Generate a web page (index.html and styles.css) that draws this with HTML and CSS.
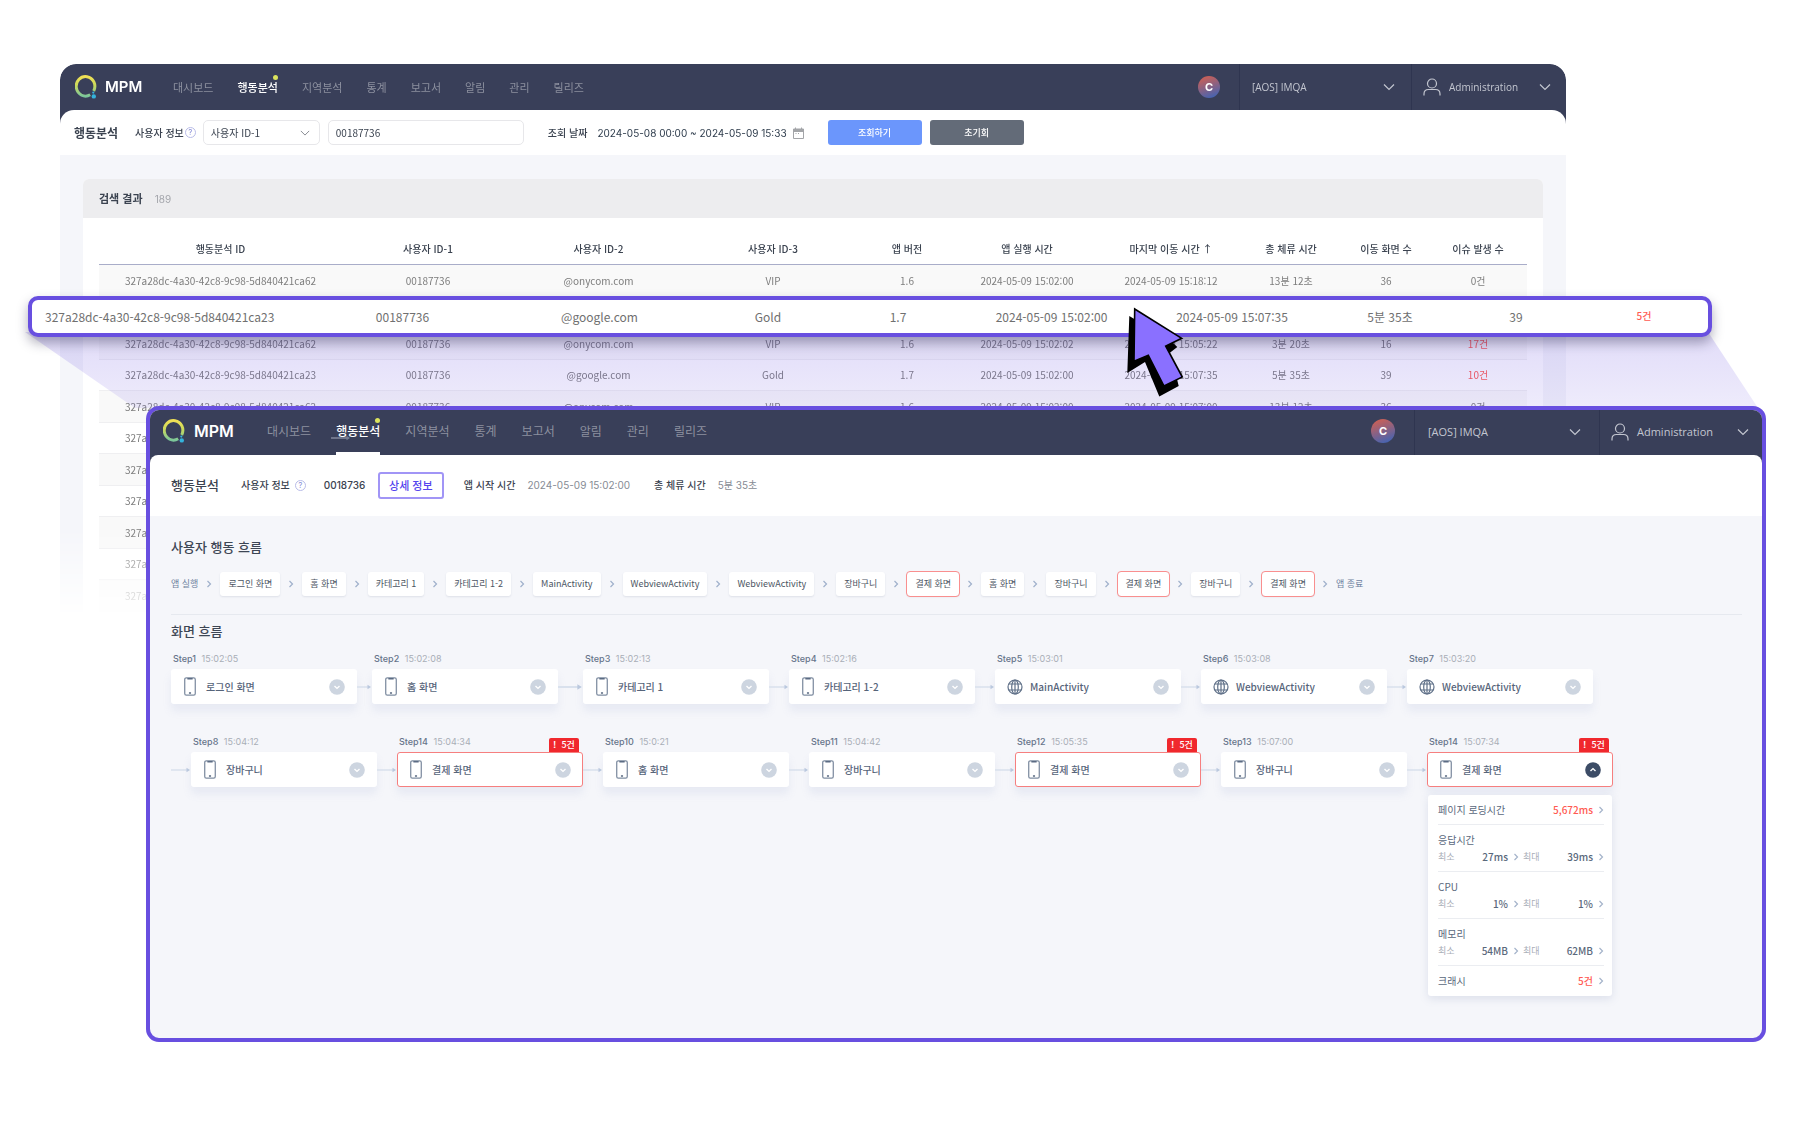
FILE: index.html
```html
<!DOCTYPE html>
<html lang="ko">
<head>
<meta charset="utf-8">
<meta name="viewport" content="width=device-width, initial-scale=1">
<title>IMQA MPM 행동분석</title>
<link rel="stylesheet" href="styles.css">
</head>
<body>
<svg class="sprite" aria-hidden="true">
  <defs>
    <linearGradient id="ring" x1="0" y1="0" x2="0" y2="1"><stop offset="0" stop-color="#f0e055"/><stop offset=".45" stop-color="#c9d95c"/><stop offset="1" stop-color="#7cc79a"/></linearGradient>
    <linearGradient id="beam" x1="0" y1="0" x2="0" y2="1"><stop offset="0" stop-color="#684fe0" stop-opacity=".2"/><stop offset="1" stop-color="#684fe0" stop-opacity=".11"/></linearGradient>
  </defs>
  <symbol id="logo" viewBox="0 0 22 24"><path d="M15.200 19.800A9.300 9.800 0 1 1 18.700 16" fill="none" stroke="url(#ring)" stroke-width="3"/><circle cx="18.800" cy="21.400" r="2.200" fill="#35b3dc"/><circle cx="18.300" cy="17.600" r="1.100" fill="#35b3dc"/></symbol>
  <symbol id="down" viewBox="0 0 12 8"><path d="M1 1.500l5 5 5-5" fill="none" stroke="currentColor" stroke-width="1.200"/></symbol>
  <symbol id="next" viewBox="0 0 6 8"><path d="M1.500 1l3 3-3 3" fill="none" stroke="currentColor" stroke-width="1.200"/></symbol>
  <symbol id="user" viewBox="0 0 18 18"><circle cx="9" cy="5.500" r="4.500" fill="none" stroke="currentColor" stroke-width="1.200"/><path d="M1 17.500V16Q1 11.500 5.500 11.500H12.500Q17 11.500 17 16V17.500" fill="none" stroke="currentColor" stroke-width="1.200"/></symbol>
  <symbol id="cal" viewBox="0 0 11 12"><path d="M.5 2.500h10v9H.5z" fill="none" stroke="#a3a5a8"/><path d="M.5 2h10v2.500H.5zM2.500.5v2M8.500.5v2" fill="#a3a5a8" stroke="#a3a5a8"/><path d="M2.500 6.500h1M5 6.500h1" stroke="#a3a5a8"/></symbol>
  <symbol id="phone" viewBox="0 0 12 18"><rect x="1" y=".8" width="10" height="16.400" rx="1.500" fill="none" stroke="#7f8da1" stroke-width="1.200"/><path d="M3.500 1.600h5M5 15.200h2" stroke="#5b6b83" stroke-width="1.400"/></symbol>
  <symbol id="globe" viewBox="0 0 16 16"><g fill="none" stroke="#5f7088" stroke-width="1.200"><circle cx="8" cy="8" r="7"/><ellipse cx="8" cy="8" rx="3.300" ry="7"/><path d="M8 1v14M1.800 5h12.400M1.800 11h12.400"/></g></symbol>
  <symbol id="toggle" viewBox="0 0 16 16"><circle cx="8" cy="8" r="7.800" fill="#cdd5e0"/><path d="M5.500 7L8 9.400 10.500 7" fill="none" stroke="#fff" stroke-width="1.400"/></symbol>
  <symbol id="toggle-open" viewBox="0 0 16 16"><circle cx="8" cy="8" r="7.800" fill="#3c4c66"/><path d="M5.500 9L8 6.600 10.500 9" fill="none" stroke="#fff" stroke-width="1.400"/></symbol>
  <symbol id="arrow" viewBox="0 0 20 6" preserveAspectRatio="xMaxYMid slice"><path d="M-10 3h26" stroke="#d9e1ed" stroke-width="1.500"/><path d="M15.500.8l3.500 2.200-3.500 2.200z" fill="#bccadf"/></symbol>
</svg>

<main class="stage">
  <section class="window" aria-label="행동분석 검색">
    <div class="window-top">
      <header class="topbar">
        <a class="brand" href="#"><svg class="brand-mark"><use href="#logo"/></svg>MPM</a>
        <nav class="menu">
          <a href="#">대시보드</a><a class="active" href="#">행동분석</a><a href="#">지역분석</a><a href="#">통계</a><a href="#">보고서</a><a href="#">알림</a><a href="#">관리</a><a href="#">릴리즈</a>
        </nav>
        <span class="company">C</span>
        <label class="project"><select aria-label="프로젝트"><option>[AOS] IMQA</option></select><svg class="chev"><use href="#down"/></svg></label>
        <button class="account" type="button"><svg class="user"><use href="#user"/></svg>Administration<svg class="chev"><use href="#down"/></svg></button>
      </header>
      <form class="filters">
        <h1 class="filters-title">행동분석</h1>
        <label class="filters-label" for="id-kind">사용자 정보</label>
        <span class="help">?</span>
        <span class="pick"><select id="id-kind"><option>사용자 ID-1</option></select><svg class="chev"><use href="#down"/></svg></span>
        <input class="id-input" type="text" value="00187736" aria-label="사용자 ID">
        <span class="filters-label">조회 날짜</span>
        <span class="range">2024-05-08 00:00 ~ 2024-05-09 15:33</span>
        <svg class="cal"><use href="#cal"/></svg>
        <button class="btn btn-primary" type="button">조회하기</button>
        <button class="btn" type="button">초기회</button>
      </form>
    </div>
    <div class="results">
      <h2 class="results-head">검색 결과 <span>189</span></h2>
      <div class="results-body">
        <table class="sessions">
          <colgroup><col class="c-id"><col class="c-u1"><col class="c-u2"><col class="c-u3"><col class="c-ver"><col class="c-start"><col class="c-last"><col class="c-stay"><col class="c-moves"><col class="c-issues"></colgroup>
          <thead><tr><th>행동분석 ID</th><th>사용자 ID-1</th><th>사용자 ID-2</th><th>사용자 ID-3</th><th>앱 버전</th><th>앱 실행 시간</th><th>마지막 이동 시간 ↑</th><th>총 체류 시간</th><th>이동 화면 수</th><th>이슈 발생 수</th></tr></thead>
          <tbody>
            <tr><td>327a28dc-4a30-42c8-9c98-5d840421ca62</td><td>00187736</td><td>@onycom.com</td><td>VIP</td><td>1.6</td><td>2024-05-09 15:02:00</td><td>2024-05-09 15:18:12</td><td>13분 12초</td><td>36</td><td>0건</td></tr>
            <tr><td></td><td></td><td></td><td></td><td></td><td></td><td></td><td></td><td></td><td></td></tr>
            <tr><td>327a28dc-4a30-42c8-9c98-5d840421ca62</td><td>00187736</td><td>@onycom.com</td><td>VIP</td><td>1.6</td><td>2024-05-09 15:02:02</td><td>2024-05-09 15:05:22</td><td>3분 20초</td><td>16</td><td class="bad">17건</td></tr>
            <tr><td>327a28dc-4a30-42c8-9c98-5d840421ca23</td><td>00187736</td><td>@google.com</td><td>Gold</td><td>1.7</td><td>2024-05-09 15:02:00</td><td>2024-05-09 15:07:35</td><td>5분 35초</td><td>39</td><td class="bad">10건</td></tr>
            <tr><td>327a28dc-4a30-42c8-9c98-5d840421ca62</td><td>00187736</td><td>@onycom.com</td><td>VIP</td><td>1.6</td><td>2024-05-09 15:02:00</td><td>2024-05-09 15:07:00</td><td>13분 12초</td><td>36</td><td>0건</td></tr>
            <tr><td>327a28dc-4a30-42c8-9c98-5d840421ca23</td><td></td><td></td><td></td><td></td><td></td><td></td><td></td><td></td><td></td></tr>
            <tr><td>327a28dc-4a30-42c8-9c98-5d840421ca62</td><td></td><td></td><td></td><td></td><td></td><td></td><td></td><td></td><td></td></tr>
            <tr><td>327a28dc-4a30-42c8-9c98-5d840421ca23</td><td></td><td></td><td></td><td></td><td></td><td></td><td></td><td></td><td></td></tr>
            <tr><td>327a28dc-4a30-42c8-9c98-5d840421ca62</td><td></td><td></td><td></td><td></td><td></td><td></td><td></td><td></td><td></td></tr>
            <tr><td>327a28dc-4a30-42c8-9c98-5d840421ca23</td><td></td><td></td><td></td><td></td><td></td><td></td><td></td><td></td><td></td></tr>
            <tr><td>327a28dc-4a30-42c8-9c98-5d840421ca62</td><td></td><td></td><td></td><td></td><td></td><td></td><td></td><td></td><td></td></tr>
          </tbody>
        </table>
      </div>
    </div>
  </section>

  <svg class="beam" viewBox="0 0 1734 76" preserveAspectRatio="none" aria-hidden="true"><path d="M0 0H1684L1734 76H110z" fill="url(#beam)"/></svg>

  <div class="picked">
    <table>
      <colgroup><col class="p-id"><col class="p-u1"><col class="p-u2"><col class="p-u3"><col class="p-ver"><col class="p-start"><col class="p-last"><col class="p-stay"><col class="p-moves"><col class="p-issues"></colgroup>
      <tbody><tr><td>327a28dc-4a30-42c8-9c98-5d840421ca23</td><td>00187736</td><td>@google.com</td><td>Gold</td><td>1.7</td><td>2024-05-09 15:02:00</td><td>2024-05-09 15:07:35</td><td>5분 35초</td><td>39</td><td class="bad">5건</td></tr></tbody>
    </table>
  </div>

  <svg class="cursor" viewBox="0 0 60 92" aria-hidden="true"><path d="M3.300 9L1.300 66 19 55l14.300 34.500L52.700 79l-2-8L41 48l10.300-8L45 34z"/><path d="M8.700 2l47 29.300-16 7.700L56.300 70 38 79 22.300 48.300 8 54.300z" fill="#8a70ff" stroke="#000" stroke-width="1.600"/></svg>

  <section class="detail" aria-label="행동분석 상세">
    <div class="window-top">
      <header class="topbar">
        <a class="brand" href="#"><svg class="brand-mark"><use href="#logo"/></svg>MPM</a>
        <nav class="menu">
          <a href="#">대시보드</a><a class="active" href="#">행동분석<svg class="trail"><use href="#arrow"/></svg></a><a href="#">지역분석</a><a href="#">통계</a><a href="#">보고서</a><a href="#">알림</a><a href="#">관리</a><a href="#">릴리즈</a>
        </nav>
        <span class="company">C</span>
        <label class="project"><select aria-label="프로젝트"><option>[AOS] IMQA</option></select><svg class="chev"><use href="#down"/></svg></label>
        <button class="account" type="button"><svg class="user"><use href="#user"/></svg>Administration<svg class="chev"><use href="#down"/></svg></button>
      </header>
      <div class="summary">
        <h1 class="summary-title">행동분석</h1>
        <span class="summary-label">사용자 정보</span><span class="help">?</span>
        <strong class="summary-id">0018736</strong>
        <button class="more" type="button">상세 정보</button>
        <span class="summary-label">앱 시작 시간</span><span class="summary-value">2024-05-09 15:02:00</span>
        <span class="summary-label">총 체류 시간</span><span class="summary-value">5분 35초</span>
      </div>
    </div>
    <div class="detail-body">
      <h2 class="section-title">사용자 행동 흐름</h2>
      <div class="path">
        <span class="end">앱 실행</span><svg class="next"><use href="#next"/></svg>
        <span class="chip">로그인 화면</span><svg class="next"><use href="#next"/></svg>
        <span class="chip">홈 화면</span><svg class="next"><use href="#next"/></svg>
        <span class="chip">카테고리 1</span><svg class="next"><use href="#next"/></svg>
        <span class="chip">카테고리 1-2</span><svg class="next"><use href="#next"/></svg>
        <span class="chip">MainActivity</span><svg class="next"><use href="#next"/></svg>
        <span class="chip">WebviewActivity</span><svg class="next"><use href="#next"/></svg>
        <span class="chip">WebviewActivity</span><svg class="next"><use href="#next"/></svg>
        <span class="chip">장바구니</span><svg class="next"><use href="#next"/></svg>
        <span class="chip alert">결제 화면</span><svg class="next"><use href="#next"/></svg>
        <span class="chip">홈 화면</span><svg class="next"><use href="#next"/></svg>
        <span class="chip">장바구니</span><svg class="next"><use href="#next"/></svg>
        <span class="chip alert">결제 화면</span><svg class="next"><use href="#next"/></svg>
        <span class="chip">장바구니</span><svg class="next"><use href="#next"/></svg>
        <span class="chip alert">결제 화면</span><svg class="next"><use href="#next"/></svg>
        <span class="end">앱 종료</span>
      </div>
      <h2 class="section-title ruled">화면 흐름</h2>
      <div class="steps">
        <div class="step"><p><b>Step1</b> 15:02:05</p><button class="card" type="button"><svg class="phone"><use href="#phone"/></svg>로그인 화면<svg class="tog"><use href="#toggle"/></svg></button></div>
        <svg class="link short"><use href="#arrow"/></svg>
        <div class="step"><p><b>Step2</b> 15:02:08</p><button class="card" type="button"><svg class="phone"><use href="#phone"/></svg>홈 화면<svg class="tog"><use href="#toggle"/></svg></button></div>
        <svg class="link long"><use href="#arrow"/></svg>
        <div class="step"><p><b>Step3</b> 15:02:13</p><button class="card" type="button"><svg class="phone"><use href="#phone"/></svg>카테고리 1<svg class="tog"><use href="#toggle"/></svg></button></div>
        <svg class="link"><use href="#arrow"/></svg>
        <div class="step"><p><b>Step4</b> 15:02:16</p><button class="card" type="button"><svg class="phone"><use href="#phone"/></svg>카테고리 1-2<svg class="tog"><use href="#toggle"/></svg></button></div>
        <svg class="link"><use href="#arrow"/></svg>
        <div class="step"><p><b>Step5</b> 15:03:01</p><button class="card" type="button"><svg class="globe"><use href="#globe"/></svg>MainActivity<svg class="tog"><use href="#toggle"/></svg></button></div>
        <svg class="link"><use href="#arrow"/></svg>
        <div class="step"><p><b>Step6</b> 15:03:08</p><button class="card" type="button"><svg class="globe"><use href="#globe"/></svg>WebviewActivity<svg class="tog"><use href="#toggle"/></svg></button></div>
        <svg class="link"><use href="#arrow"/></svg>
        <div class="step"><p><b>Step7</b> 15:03:20</p><button class="card" type="button"><svg class="globe"><use href="#globe"/></svg>WebviewActivity<svg class="tog"><use href="#toggle"/></svg></button></div>
      </div>
      <div class="steps">
        <svg class="link"><use href="#arrow"/></svg>
        <div class="step"><p><b>Step8</b> 15:04:12</p><button class="card" type="button"><svg class="phone"><use href="#phone"/></svg>장바구니<svg class="tog"><use href="#toggle"/></svg></button></div>
        <svg class="link"><use href="#arrow"/></svg>
        <div class="step"><p><b>Step14</b> 15:04:34<em><i>!</i>5건</em></p><button class="card alert" type="button"><svg class="phone"><use href="#phone"/></svg>결제 화면<svg class="tog"><use href="#toggle"/></svg></button></div>
        <svg class="link"><use href="#arrow"/></svg>
        <div class="step"><p><b>Step10</b> 15:0:21</p><button class="card" type="button"><svg class="phone"><use href="#phone"/></svg>홈 화면<svg class="tog"><use href="#toggle"/></svg></button></div>
        <svg class="link"><use href="#arrow"/></svg>
        <div class="step"><p><b>Step11</b> 15:04:42</p><button class="card" type="button"><svg class="phone"><use href="#phone"/></svg>장바구니<svg class="tog"><use href="#toggle"/></svg></button></div>
        <svg class="link"><use href="#arrow"/></svg>
        <div class="step"><p><b>Step12</b> 15:05:35<em><i>!</i>5건</em></p><button class="card alert" type="button"><svg class="phone"><use href="#phone"/></svg>결제 화면<svg class="tog"><use href="#toggle"/></svg></button></div>
        <svg class="link"><use href="#arrow"/></svg>
        <div class="step"><p><b>Step13</b> 15:07:00</p><button class="card" type="button"><svg class="phone"><use href="#phone"/></svg>장바구니<svg class="tog"><use href="#toggle"/></svg></button></div>
        <svg class="link"><use href="#arrow"/></svg>
        <div class="step"><p><b>Step14</b> 15:07:34<em><i>!</i>5건</em></p><button class="card alert" type="button" aria-expanded="true"><svg class="phone"><use href="#phone"/></svg>결제 화면<svg class="tog"><use href="#toggle-open"/></svg></button>
          <div class="metrics">
            <div class="metric single"><span>페이지 로딩시간</span><a class="bad" href="#">5,672ms<svg class="go"><use href="#next"/></svg></a></div>
            <div class="metric"><span>응답시간</span><div class="pair"><small>최소</small><a href="#">27ms<svg class="go"><use href="#next"/></svg></a><small>최대</small><a href="#">39ms<svg class="go"><use href="#next"/></svg></a></div></div>
            <div class="metric"><span>CPU</span><div class="pair"><small>최소</small><a href="#">1%<svg class="go"><use href="#next"/></svg></a><small>최대</small><a href="#">1%<svg class="go"><use href="#next"/></svg></a></div></div>
            <div class="metric"><span>메모리</span><div class="pair"><small>최소</small><a href="#">54MB<svg class="go"><use href="#next"/></svg></a><small>최대</small><a href="#">62MB<svg class="go"><use href="#next"/></svg></a></div></div>
            <div class="metric single"><span>크래시</span><a class="bad" href="#">5건<svg class="go"><use href="#next"/></svg></a></div>
          </div>
        </div>
      </div>
    </div>
  </section>
</main>
</body>
</html>
```
FILE: styles.css
```css
* { box-sizing: border-box; margin: 0; padding: 0; }
body { background: #fff; color: #3b4350; font: 10px/16px "Noto Sans CJK KR", "Noto Sans", sans-serif; }
button, select, input { font: inherit; color: inherit; border: 0; background: none; }
a { color: inherit; text-decoration: none; }
svg { flex: none; }
.sprite { position: absolute; width: 0; height: 0; }
.stage { position: relative; min-height: 100vh; padding: 64px 246px 0 60px; }

/* Search window */
.window {
  border-radius: 16px 16px 0 0;
  background: #f5f6fa;
  overflow: hidden;
  -webkit-mask-image: linear-gradient(#000 465px, transparent 555px);
  mask-image: linear-gradient(#000 465px, transparent 555px);
}
.window-top { background: #393f59; }
.topbar { display: flex; align-items: center; height: 46px; padding-left: 15px; color: #c3c6d0; }
.brand { display: flex; align-items: center; gap: 8px; width: 98px; color: #fff; font: 600 15px/20px Inter, sans-serif; }
.brand-mark { width: 22px; height: 24px; }
.menu { display: flex; gap: 24px; flex: 1; font-size: 11px; color: #8c909f; }
.menu a { position: relative; line-height: 46px; }
.menu .active { color: #fff; font-weight: 500; }
.menu .active::after { content: ""; position: absolute; top: 11px; right: 0; width: 5px; height: 5px; border-radius: 50%; background: #dbe35d; }
.company { width: 22px; height: 22px; margin-right: 19px; border-radius: 50%; background: linear-gradient(160deg, #db5f4b, #3564bd); color: #fff; font: 700 11px/22px Inter, sans-serif; text-align: center; }
.project, .account { display: flex; align-items: center; height: 46px; border-left: 1px solid #2f3550; font-family: "Open Sans", sans-serif; }
.project { width: 172px; padding: 0 16px 0 12px; }
.project select { flex: 1; appearance: none; }
.account { width: 155px; padding: 0 15px 0 11px; }
.chev { width: 12px; height: 8px; }
.account .chev { margin-left: auto; }
.user { width: 18px; height: 18px; margin-right: 8px; }

.filters { display: flex; align-items: center; height: 45px; padding: 0 14px; background: #fff; border-radius: 14px 14px 0 0; }
.filters-title { width: 61px; font-size: 12px; font-weight: 700; }
.filters-label { font-weight: 500; }
.help { width: 11px; height: 11px; margin: 0 7px 0 1px; border: 1px solid #b9bce8; border-radius: 50%; color: #8b8fd8; font: 8px/9px Inter, sans-serif; text-align: center; }
.pick { display: flex; align-items: center; width: 117px; height: 25px; margin-right: 8px; padding: 0 9px 0 7px; border: 1px solid #e7e7ea; border-radius: 5px; }
.pick select { flex: 1; appearance: none; }
.pick .chev { color: #8a8d94; width: 10px; }
.id-input { width: 196px; height: 25px; margin-right: 24px; padding: 0 7px; border: 1px solid #e7e7ea; border-radius: 5px; }
.range { margin: 0 6px 0 10px; color: #2d3b4b; font-family: Inter, sans-serif; white-space: nowrap; }
.cal { width: 11px; height: 12px; margin-right: 24px; }
.btn { width: 94px; height: 25px; margin-right: 8px; border-radius: 3px; background: #636b78; color: #fff; font-size: 9px; font-weight: 500; }
.btn-primary { background: #6b96fc; }

.results { margin: 24px 23px 0; background: #fff; border-radius: 6px 6px 0 0; overflow: hidden; }
.results-head { height: 39px; padding-left: 16px; background: #ededef; font-size: 11px; line-height: 39px; }
.results-head span { margin-left: 9px; color: #a3a5ab; font: 10px Inter, sans-serif; }
.results-body { padding: 0 16px; }
table { width: 100%; table-layout: fixed; border-collapse: separate; border-spacing: 0; text-align: center; white-space: nowrap; }
.sessions th { height: 47px; padding-top: 15px; border-bottom: 1px solid #a9adc9; font-weight: 500; }
.sessions td { height: 31px; border-bottom: 1px solid #efeff1; color: #7d7d7d; }
.sessions tr:nth-child(odd) td { height: 32px; background: #f9f9f9; }
.sessions td.bad, .bad { color: #ff5a52; }
.c-id { width: 243px; } .c-u1 { width: 172px; } .c-u2 { width: 169px; } .c-u3 { width: 180px; } .c-ver { width: 88px; }
.c-start { width: 152px; } .c-last { width: 136px; } .c-stay { width: 104px; } .c-moves { width: 86px; } .c-issues { width: 98px; }

/* Enlarged row and the beam that leads to the detail window */
.beam { position: absolute; top: 332px; left: 25px; width: calc(100% - 79px); height: 76px; }
.picked { position: absolute; top: 296px; left: 28px; right: 100px; height: 41px; padding-left: 13px; border: 4px solid #684fe0; border-radius: 10px; background: #fff; box-shadow: 0 6px 12px rgba(30, 25, 60, .35); color: #707070; font-size: 12px; }
.picked td { height: 33px; padding-top: 1px; }
.picked td:first-child { text-align: left; }
.picked td.bad { padding: 0 0 1px 6px; font-size: 10px; font-weight: 500; }
.p-id { width: 262px; } .p-u1 { width: 191px; } .p-u2 { width: 203px; } .p-u3 { width: 134px; } .p-ver { width: 126px; }
.p-start { width: 181px; } .p-last { width: 180px; } .p-stay { width: 136px; } .p-moves { width: 116px; } .p-issues { width: 134px; }
.cursor { position: absolute; top: 307px; left: 1126px; width: 60px; height: 92px; }

/* Detail window */
.detail { position: absolute; top: 406px; left: 146px; right: 46px; border: 4px solid #684fe0; border-radius: 13px; background: #f5f6fa; overflow: hidden; }
.detail .topbar { height: 45px; padding: 0 0 2px 13px; }
.detail .brand { width: 104px; gap: 9px; padding-bottom: 2px; font-size: 16px; }
.detail .menu { gap: 25px; font-size: 12px; }
.detail .menu a { height: 47px; line-height: 46px; }
.detail .menu .active { border-bottom: 3px solid #fff; }
.detail .menu .active::after { top: 10px; }
.trail { position: absolute; left: -5px; bottom: 11px; width: 20px; height: 6px; opacity: .45; }
.detail .company { width: 24px; height: 24px; margin-bottom: 2px; line-height: 24px; }
.detail .project, .detail .account { height: 47px; font-size: 11px; }
.detail .project { width: 185px; padding: 0 18px 0 13px; }
.detail .account { width: 163px; padding-right: 13px; }
.summary { display: flex; align-items: center; height: 61px; padding: 0 0 1px 21px; border-radius: 8px 8px 0 0; background: #fff; font-weight: 500; }
.summary-title { width: 70px; font-size: 13px; font-weight: 500; }
.summary-label { white-space: nowrap; font-size: 10px; }
.summary .help { margin: 0 18px 0 5px; }
.summary-id { width: 54px; font: 500 10px/16px Inter, sans-serif; }
.more { width: 66px; height: 27px; margin-right: 20px; border: 2px solid #a195f6; border-radius: 3px; color: #5443ee; font-size: 11px; font-weight: 500; }
.summary-value { margin: 0 24px 0 12px; color: #868b94; font: 10px/16px Inter, "Noto Sans CJK KR", sans-serif; }

.detail-body { padding: 19px 20px 42px 21px; }
.section-title { color: #3d4654; font-size: 13px; font-weight: 500; line-height: 24px; }
.path { display: flex; align-items: center; height: 26px; margin: 12px 0 17px; font-size: 9px; font-weight: 500; color: #4c5563; white-space: nowrap; }
.end { color: #6f82a0; font-weight: 400; }
.next { width: 6px; height: 8px; margin: 0 8px; color: #9fb0cb; }
.chip { padding: 4px 8px; border-radius: 3px; background: #fff; box-shadow: 0 1px 2px rgba(60, 70, 110, .12); font-weight: 400; }
.chip.alert { outline: 1px solid #f98f8f; }
.ruled { padding-top: 4px; border-top: 1px solid #e6e9ef; }
.steps { display: flex; align-items: flex-start; margin-top: 8px; }
.steps + .steps { margin-top: 30px; }
.step { width: 186px; flex: none; }
.step p { position: relative; height: 18px; padding-left: 2px; color: #a9aeb7; font: 9px/16px Inter, sans-serif; }
.step b { margin-right: 3px; color: #66748a; font-weight: 500; }
.step em { position: absolute; right: 4px; bottom: 0; display: flex; justify-content: center; gap: 5px; width: 30px; height: 14px; border-radius: 2px 2px 0 0; background: #f0282d; color: #fff; font: 500 9px/14px "Noto Sans CJK KR", sans-serif; }
.step i { font-style: normal; font-weight: 700; }
.card { display: flex; align-items: center; width: 100%; height: 35px; padding: 0 12px; border-radius: 3px; background: #fff; box-shadow: 0 7px 8px rgba(130, 150, 200, .12); color: #56647a; font-weight: 500; }
.card.alert { border: 1px solid #f67f7f; padding: 0 11px; }
.phone { width: 14px; height: 19px; margin-right: 9px; }
.globe { width: 16px; height: 18px; margin-right: 7px; }
.tog { width: 16px; height: 16px; margin-left: auto; }
.link { width: 20px; height: 6px; margin-top: 33px; }
.link.short { width: 15px; }
.link.long { width: 25px; }

.metrics { margin: 8px 1px 0; padding: 0 8px 1px 10px; border-radius: 3px; background: #fff; box-shadow: 0 3px 8px rgba(110, 125, 170, .18); color: #5a687c; }
.metric { padding: 7px 0 6px; border-top: 1px solid #ebedf1; }
.metric:first-child { border-top: 0; }
.single { display: flex; justify-content: space-between; }
.metric a { display: flex; align-items: center; justify-content: flex-end; gap: 5px; font-weight: 500; }
.pair { display: grid; grid-template-columns: 20px 1fr 20px 1fr; column-gap: 4px; margin-top: 1px; }
.pair small { font-size: 9px; color: #a9aeb7; }
.go { width: 6px; height: 8px; color: #a4b3ca; }
```
